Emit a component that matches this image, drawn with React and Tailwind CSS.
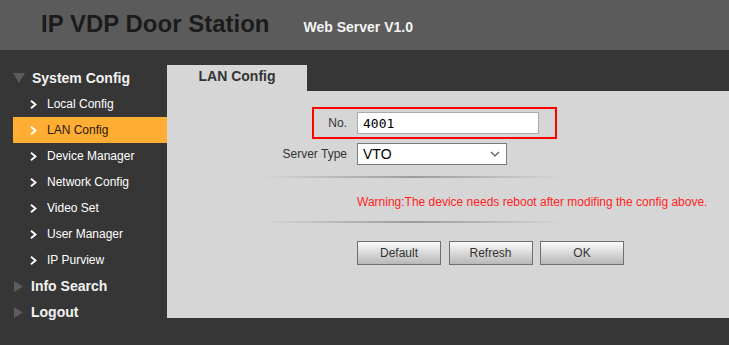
import React from "react";

const Chevron = () => (
  <svg width="7" height="9" viewBox="0 0 7 9" className="shrink-0">
    <path d="M1 0.8 L5.5 4.5 L1 8.2" stroke="#ffffff" strokeWidth="1.9" fill="none" />
  </svg>
);

const TriDown = () => (
  <svg width="12" height="10" viewBox="0 0 12 10" className="shrink-0">
    <polygon points="0,0 12,0 6,10" fill="#5c5c5c" />
  </svg>
);

const TriRight = () => (
  <svg width="9" height="11" viewBox="0 0 9 11" className="shrink-0">
    <polygon points="0,0 9,5.5 0,11" fill="#5c5c5c" />
  </svg>
);

const items = [
  "Local Config",
  "LAN Config",
  "Device Manager",
  "Network Config",
  "Video Set",
  "User Manager",
  "IP Purview",
];

function Btn({ children }) {
  return (
    <button className="w-[84px] h-[24px] border border-[#6e6e6e] bg-linear-to-b from-[#fbfbfb] to-[#b8b8b8] text-[12px] text-[#333] leading-none">
      {children}
    </button>
  );
}

export default function App() {
  return (
    <div
      className="w-[729px] h-[345px] bg-[#363636] overflow-hidden"
      style={{ fontFamily: '"Liberation Sans", Arial, sans-serif' }}
    >
      {/* Header */}
      <div className="h-[50px] bg-[#5b5b5b] flex items-baseline pl-[41px] pt-[12px]">
        <span className="text-[24px] font-bold leading-[24px] text-[#1b1b1b]">
          IP VDP Door Station
        </span>
        <span className="ml-[34px] text-[14px] font-bold text-[#f4f4f4] leading-none">
          Web Server V1.0
        </span>
      </div>

      <div className="flex">
        {/* Sidebar */}
        <div className="w-[167px] shrink-0 pt-[15px]">
          <div className="h-[26px] flex items-center pl-[13px]">
            <TriDown />
            <span className="ml-[7px] text-[14px] font-bold text-[#f2f2f2]">System Config</span>
          </div>
          {items.map((it) => {
            const active = it === "LAN Config";
            return (
              <div
                key={it}
                className={
                  "h-[26px] ml-[13px] flex items-center pl-[17px] " +
                  (active ? "bg-[#ffad33]" : "")
                }
              >
                <Chevron />
                <span
                  className={
                    "ml-[10px] text-[12px] " + (active ? "text-[#2a1a10]" : "text-white")
                  }
                >
                  {it}
                </span>
              </div>
            );
          })}
          <div className="h-[26px] flex items-center pl-[14px]">
            <TriRight />
            <span className="ml-[8px] text-[14px] font-bold text-[#f2f2f2]">Info Search</span>
          </div>
          <div className="h-[26px] flex items-center pl-[14px]">
            <TriRight />
            <span className="ml-[8px] text-[14px] font-bold text-[#f2f2f2]">Logout</span>
          </div>
        </div>

        {/* Main */}
        <div className="flex-1 pt-[15px]">
          <div className="w-[140px] h-[26px] bg-[#d6d6d6] flex items-center justify-center pb-[3px]">
            <span className="text-[14px] font-bold text-[#333]">LAN Config</span>
          </div>
          <div className="h-[227px] bg-[#d6d6d6] pt-[16px]">
            {/* Row: No. */}
            <div className="flex pl-[145px]">
              <div className="w-[245px] h-[32px] border-2 border-[#ff0000] flex items-center">
                <span className="w-[33px] text-right text-[12px] text-[#333]">No.</span>
                <div className="ml-[10px] w-[182px] h-[22px] bg-white border border-[#a9a9a9] flex items-center pl-[5px]">
                  <span
                    className="text-[13px] text-black leading-none"
                    style={{ fontFamily: '"DejaVu Sans Mono", monospace' }}
                  >
                    4001
                  </span>
                </div>
              </div>
            </div>
            {/* Row: Server Type */}
            <div className="flex items-center mt-[4px]">
              <span className="w-[180px] text-right text-[12px] text-[#333]">Server Type</span>
              <div className="ml-[10px] w-[150px] h-[22px] bg-white border border-[#7a7a7a] flex items-center pl-[5px] pr-[6px] justify-between">
                <span className="text-[14px] text-black leading-none">VTO</span>
                <svg width="10" height="6" viewBox="0 0 10 6">
                  <path d="M1 1 L5 5 L9 1" stroke="#555" strokeWidth="1.2" fill="none" />
                </svg>
              </div>
            </div>
            {/* Separator */}
            <div className="mt-[11px] ml-[96px] w-[300px] h-[2px] bg-linear-to-r from-[#d6d6d6] via-[#9c9c9c] to-[#d6d6d6]" />
            {/* Warning */}
            <div className="mt-[17px] ml-[190px] text-[12px] text-[#ff1f1f] leading-[14px]">
              Warning:The device needs reboot after modifing the config above.
            </div>
            {/* Separator */}
            <div className="mt-[12px] ml-[96px] w-[300px] h-[2px] bg-linear-to-r from-[#d6d6d6] via-[#9c9c9c] to-[#d6d6d6]" />
            {/* Buttons */}
            <div className="mt-[18px] ml-[190px] flex gap-[7.5px]">
              <Btn>Default</Btn>
              <Btn>Refresh</Btn>
              <Btn>OK</Btn>
            </div>
          </div>
        </div>
      </div>
    </div>
  );
}
